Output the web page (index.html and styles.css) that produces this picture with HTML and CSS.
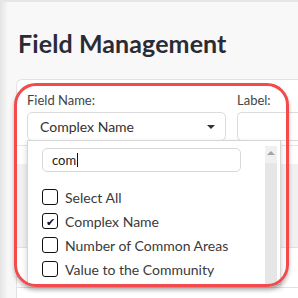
FILE: index.html
```html
<!DOCTYPE html>
<html>
<head>
<meta charset="utf-8">
<link rel="stylesheet" href="styles.css">
</head>
<body>
<div class="sidebar-edge"></div>
<main class="main">
  <h1 class="title">Field Management</h1>
  <section class="card">
    <div class="form-row">
      <div class="field field-name">
        <label class="field-label">Field Name:</label>
        <div class="select">
          <span class="select-value">Complex Name</span>
          <span class="caret"></span>
        </div>
        <div class="dropdown">
          <div class="dropdown-body">
            <div class="search"><span class="search-text">com</span><span class="cursor"></span></div>
            <ul class="options">
              <li class="option"><span class="box"></span>Select All</li>
              <li class="option"><span class="box checked">&#10004;</span>Complex Name</li>
              <li class="option"><span class="box"></span>Number of Common Areas</li>
              <li class="option"><span class="box"></span>Value to the Community</li>
            </ul>
          </div>
          <div class="scrollbar"><span class="arrow-up"></span><span class="thumb"></span></div>
        </div>
      </div>
      <div class="field field-label-col">
        <label class="field-label">Label:</label>
        <div class="input"></div>
      </div>
    </div>
    <div class="table">
      <div class="table-gap"></div>
      <div class="table-head"></div>
      <div class="table-row"></div>
    </div>
  </section>
</main>
<div class="highlight"></div>
</body>
</html>
```
FILE: styles.css
```css
* { box-sizing: border-box; }
html, body { margin: 0; padding: 0; }
body {
  width: 298px;
  height: 298px;
  overflow: hidden;
  background: #f8f8f8;
  font-family: Lato, "Noto Sans", sans-serif;
  color: #333;
  border-top: 2px solid #e6e6e6;
  position: relative;
}
.sidebar-edge {
  position: absolute;
  left: 0; top: 0; bottom: 0;
  width: 8px;
  background: linear-gradient(to right, #e4e4e4, #f8f8f8);
}
.main {
  padding-left: 16px;
}
.title {
  margin: 26px 0 0 2px;
  font-size: 25px;
  font-weight: 700;
  color: #2b2b36;
  line-height: 30px;
  letter-spacing: 0.1px;
}
.card {
  margin-top: 21px;
  background: #fff;
  border: 1px solid #e2e2e2;
  border-right: none;
  border-radius: 6px 0 0 6px;
  height: 230px;
}
.form-row {
  display: flex;
  gap: 11px;
  padding: 12px 0 0 10px;
  height: 66px;
  border-bottom: 1px solid #e4e4e4;
}
.field { position: relative; }
.field-label {
  display: block;
  font-size: 13px;
  line-height: 16px;
  color: #444;
  margin-bottom: 4px;
}
.select {
  width: 199px;
  height: 29px;
  border: 1px solid #dcdcdc;
  border-radius: 5px;
  display: flex;
  align-items: center;
  justify-content: space-between;
  padding: 0 10px 0 12px;
}
.select-value { font-size: 14px; color: #333; }
.caret {
  width: 0; height: 0;
  border-left: 4px solid transparent;
  border-right: 4px solid transparent;
  border-top: 4px solid #333;
}
.field-label-col { flex: 1; }
.input {
  width: 100%;
  height: 29px;
  border: 1px solid #dcdcdc;
  border-right: none;
  border-radius: 5px 0 0 5px;
}
.dropdown {
  position: absolute;
  left: 0;
  top: 48px;
  width: 254px;
  height: 145px;
  background: #fff;
  border: 1px solid #d6d6d6;
  box-shadow: 0 3px 6px rgba(0,0,0,0.18);
  display: flex;
  z-index: 2;
}
.dropdown-body {
  flex: 1;
  padding: 7px 0 0 14px;
}
.search {
  width: 199px;
  height: 24px;
  border: 1px solid #d8d8d8;
  border-radius: 5px;
  display: flex;
  align-items: center;
  padding-left: 9px;
  font-size: 13px;
  color: #222;
}
.cursor {
  display: inline-block;
  width: 1px;
  height: 14px;
  background: #111;
  margin-left: 1px;
}
.options {
  list-style: none;
  margin: 13px 0 0 0;
  padding: 0;
}
.option {
  display: flex;
  align-items: center;
  gap: 7px;
  height: 24px;
  font-size: 14px;
  color: #3a3a3a;
}
.box {
  width: 16px;
  height: 16px;
  border: 1.5px solid #111;
  border-radius: 3px;
  display: flex;
  align-items: center;
  justify-content: center;
  font-size: 11px;
  line-height: 1;
  color: #111;
}
.scrollbar {
  width: 12px;
  margin: 5px 3px 0 0;
  background: #f0f0f0;
  display: flex;
  flex-direction: column;
  align-items: center;
}
.arrow-up {
  margin-top: 5px;
  width: 0; height: 0;
  border-left: 4px solid transparent;
  border-right: 4px solid transparent;
  border-bottom: 4px solid #a5a5a5;
}
.thumb {
  margin-top: 8px;
  width: 100%;
  flex: 1;
  background: #e6e6e6;
}
.table-gap { height: 18px; }
.table-head {
  height: 84px;
  background: #f1f1f1;
  border-bottom: 1px solid #e2e2e2;
}
.table-row {
  height: 40px;
  border-bottom: 1px solid #e2e2e2;
}
.highlight {
  position: absolute;
  left: 14px;
  top: 81px;
  width: 275px;
  height: 204px;
  border: 3px solid #f24a4d;
  border-radius: 22px;
  box-shadow: 0 3px 4px rgba(0,0,0,0.25);
  z-index: 5;
  pointer-events: none;
}
```
